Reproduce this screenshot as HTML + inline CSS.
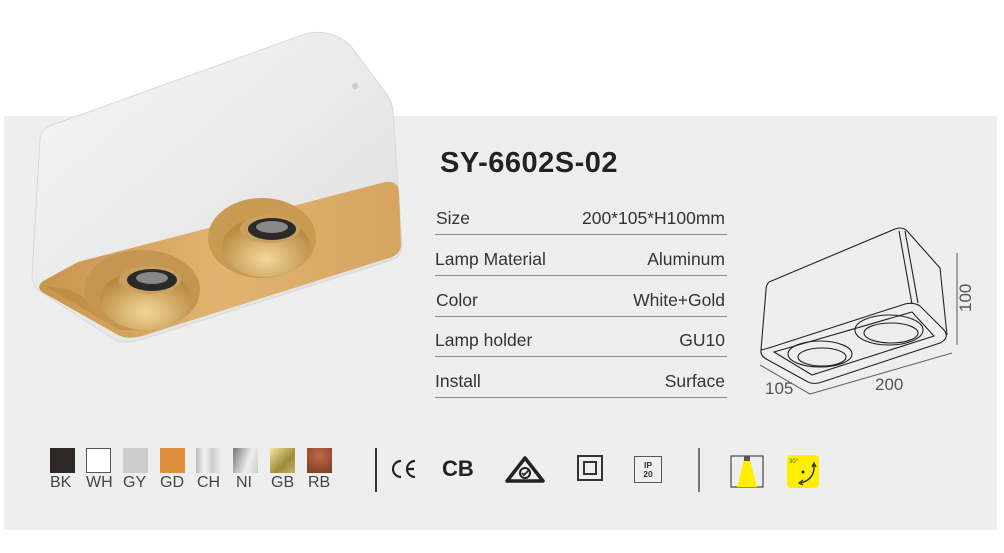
<!DOCTYPE html>
<html><head><meta charset="utf-8"><style>
body{margin:0;width:1004px;height:553px;background:#fff;position:relative;overflow:hidden;font-family:"Liberation Sans",sans-serif;}
.panel{position:absolute;left:4px;top:116px;width:993px;height:414px;background:#eeeeee;}
.abs{position:absolute}
.title{left:440px;top:147px;font-size:29px;font-weight:bold;color:#222;letter-spacing:0.5px}
.row{position:absolute;left:435px;width:292px;height:40px;border-bottom:1.5px solid #8a8a8a;font-size:17.5px;color:#333}
.row span{position:absolute;bottom:5px}
.row .r{right:2px}
.sw{position:absolute;top:448px;width:25px;height:25px}
.lb{position:absolute;top:474px;font-size:16px;color:#444}
</style></head><body>
<div class="panel"></div>

<svg class="abs" style="left:0;top:0" width="420" height="360" viewBox="0 0 420 360">
<defs>
<linearGradient id="wh" x1="0" y1="0" x2="1" y2="1"><stop offset="0" stop-color="#f6f6f6"/><stop offset="1" stop-color="#dedede"/></linearGradient>
<linearGradient id="gd" x1="0" y1="0" x2="1" y2="0"><stop offset="0" stop-color="#c8954e"/><stop offset="0.5" stop-color="#e0b470"/><stop offset="1" stop-color="#d6a560"/></linearGradient>
<radialGradient id="cup" cx="0.5" cy="0.7" r="0.6"><stop offset="0" stop-color="#f3d89a"/><stop offset="1" stop-color="#b98a42"/></radialGradient>
</defs>
<path d="M40 140 Q40 128 55 124 L305 34 Q330 28 350 45 L385 92 Q392 100 393 112 L402 245 Q402 256 392 260 L140 340 Q125 344 115 340 L38 290 Q32 284 32 275 Z" fill="url(#wh)" stroke="#d8d8d8"/>
<path d="M78 262 L385 182 Q398 180 399 192 L401 245 Q401 253 392 257 L142 336 Q128 340 118 335 L42 292 Q35 286 45 280 Z" fill="url(#gd)"/>
<path d="M45 286 L120 330 L135 330 L125 318 L70 290 Z" fill="#b07a3a" opacity="0.4"/>
<ellipse cx="262" cy="238" rx="54" ry="40" fill="#c99a52"/>
<ellipse cx="266" cy="247" rx="44" ry="30" fill="url(#cup)"/>
<ellipse cx="270" cy="229" rx="30" ry="14" fill="#c9a060"/>
<ellipse cx="272" cy="229" rx="24" ry="11" fill="#2a2a2a"/>
<ellipse cx="272" cy="227" rx="16" ry="6" fill="#888"/>
<ellipse cx="142" cy="290" rx="58" ry="40" fill="#c59552"/>
<ellipse cx="146" cy="300" rx="46" ry="30" fill="url(#cup)"/>
<ellipse cx="150" cy="280" rx="31" ry="14" fill="#c9a060"/>
<ellipse cx="152" cy="280" rx="25" ry="11" fill="#2a2a2a"/>
<ellipse cx="152" cy="278" rx="16" ry="6" fill="#888"/>
<circle cx="355" cy="86" r="3" fill="#ccc"/>
</svg>

<div class="abs title">SY-6602S-02</div>
<div class="row" style="top:194px"><span style="left:1px">Size</span><span class="r">200*105*H100mm</span></div>
<div class="row" style="top:235px"><span style="left:0">Lamp Material</span><span class="r">Aluminum</span></div>
<div class="row" style="top:276px"><span style="left:1px">Color</span><span class="r">White+Gold</span></div>
<div class="row" style="top:316px"><span style="left:0">Lamp holder</span><span class="r">GU10</span></div>
<div class="row" style="top:357px"><span style="left:0">Install</span><span class="r">Surface</span></div>

<svg class="abs" style="left:0;top:0" width="1004" height="553" fill="none" stroke="#222" stroke-width="1.1">
<path d="M769 282 L895 229 Q903 226 908 232 L940 268 L947 335"/>
<path d="M769 282 Q766 285 766 290 L761 350"/>
<path d="M899 231 L912 304 M905 231 L918 303"/>
<path d="M761 350 Q760 356 768 360 L808 382 Q814 385 822 382 L940 343 Q950 338 944 330 L920 306 Q914 302 905 304 L775 346 Q766 349 761 350"/>
<path d="M774 352 L812 375 L934 336 L912 312 Z"/>
<ellipse cx="820" cy="354" rx="32" ry="13"/><ellipse cx="822" cy="357" rx="24" ry="9"/>
<ellipse cx="889" cy="330" rx="34" ry="15"/><ellipse cx="891" cy="333" rx="27" ry="10"/>
<path d="M957 253 L957 345" stroke="#666"/>
<path d="M760 365 L810 394 L952 353" stroke="#666"/>
<text x="971" y="312" transform="rotate(-90 971 312)" font-family="Liberation Sans" font-size="17" fill="#555" stroke="none">100</text>
<text x="765" y="394" font-family="Liberation Sans" font-size="17" fill="#555" stroke="none">105</text>
<text x="875" y="390" font-family="Liberation Sans" font-size="17" fill="#555" stroke="none">200</text>
</svg>

<div class="sw" style="left:50px;background:#2e2826"></div>
<div class="sw" style="left:86px;width:23px;height:23px;border:1px solid #555;background:#fff"></div>
<div class="sw" style="left:123px;background:#cdcdcd"></div>
<div class="sw" style="left:160px;background:#e0903c"></div>
<div class="sw" style="left:196px;background:linear-gradient(90deg,#bbb,#f4f4f4,#ccc,#eee)"></div>
<div class="sw" style="left:233px;background:linear-gradient(110deg,#777,#eee 60%,#ccc)"></div>
<div class="sw" style="left:270px;background:linear-gradient(135deg,#f2e6a0,#a08a3a 60%,#c9b260)"></div>
<div class="sw" style="left:307px;background:radial-gradient(circle at 50% 30%,#c06a48,#7a3a22)"></div>
<div class="lb" style="left:50px">BK</div><div class="lb" style="left:86px">WH</div><div class="lb" style="left:123px">GY</div><div class="lb" style="left:160px">GD</div><div class="lb" style="left:197px">CH</div><div class="lb" style="left:236px">NI</div><div class="lb" style="left:271px">GB</div><div class="lb" style="left:308px">RB</div>

<div class="abs" style="left:375px;top:448px;width:1.5px;height:44px;background:#333"></div>
<svg class="abs" style="left:390px;top:458px" width="28" height="22" viewBox="0 0 28 22" fill="none" stroke="#222" stroke-width="2.2"><path d="M11 3 A8 8 0 1 0 11 19"/><path d="M25 3 A8 8 0 1 0 25 19 M18 11 L24 11"/></svg>
<div class="abs" style="left:442px;top:456px;font-size:22px;font-weight:bold;color:#222">CB</div>
<svg class="abs" style="left:503px;top:455px" width="44" height="30" viewBox="0 0 44 30"><path d="M22 3 L40 26 L4 26 Z" fill="none" stroke="#222" stroke-width="3.5" stroke-linejoin="round"/><circle cx="22" cy="18" r="5" fill="none" stroke="#222" stroke-width="2"/><path d="M19 18 l2 2 l5 -5" fill="none" stroke="#222" stroke-width="1.8"/></svg>
<div class="abs" style="left:577px;top:455px;width:26px;height:26px;border:2px solid #333;box-sizing:border-box"></div>
<div class="abs" style="left:583px;top:461px;width:14px;height:14px;border:2px solid #333;box-sizing:border-box"></div>
<div class="abs" style="left:634px;top:456px;width:28px;height:27px;border:1px solid #555;box-sizing:border-box;font-size:8.5px;font-weight:bold;text-align:center;line-height:9px;padding-top:4px;color:#333">IP<br>20</div>
<div class="abs" style="left:698px;top:448px;width:1.5px;height:44px;background:#777"></div>
<svg class="abs" style="left:730px;top:455px" width="34" height="33" viewBox="0 0 34 33"><rect x="1" y="1" width="32" height="31" fill="none" stroke="#444" stroke-width="1.2"/><polygon points="14,5 20,5 27,32 7,32" fill="#ffee00"/><rect x="14" y="1" width="6" height="5" fill="#555"/></svg>
<svg class="abs" style="left:787px;top:455px" width="32" height="33" viewBox="0 0 32 33"><rect x="0" y="0" width="32" height="33" rx="4" fill="#ffee00"/><text x="2" y="8" font-size="6" fill="#555" font-family="Liberation Sans">30°</text><circle cx="16" cy="17" r="1.5" fill="#222"/><path d="M27 10 Q28 24 14 28" fill="none" stroke="#222" stroke-width="1.3"/><path d="M25 12 L27 8 L29 12 M16 25 L12 28 L16 30" fill="none" stroke="#222" stroke-width="1.2"/></svg>
</body></html>
